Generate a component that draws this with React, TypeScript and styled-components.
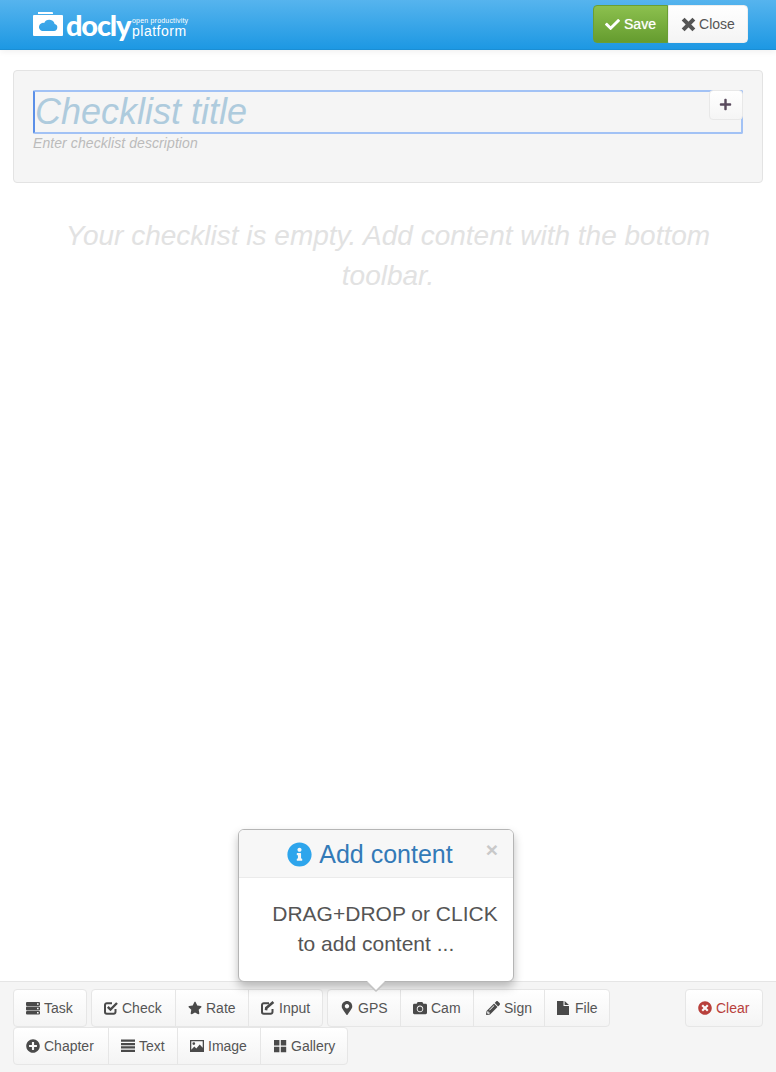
import styled, { createGlobalStyle } from "styled-components";
import type { ReactNode } from "react";
import {
  FaCamera,
  FaCheck,
  FaInfoCircle,
  FaMapMarkerAlt,
  FaPencilAlt,
  FaPlus,
  FaPlusCircle,
  FaStar,
  FaTimesCircle,
} from "react-icons/fa";

const GlobalStyle = createGlobalStyle`
  html, body {
    margin: 0;
    padding: 0;
    background: #fff;
    font-family: "Liberation Sans", Arial, sans-serif;
    font-size: 14px;
    color: #555;
  }
  * { box-sizing: border-box; }
`;

const Page = styled.div`
  display: flex;
  flex-direction: column;
  width: 776px;
  height: 1072px;
  overflow: hidden;
`;

const Header = styled.header`
  flex: none;
  display: flex;
  align-items: flex-start;
  justify-content: space-between;
  height: 50px;
  padding: 5px 28px 0 33px;
  background: linear-gradient(to bottom, #56b4ee, #1d98e3);
  border-bottom: 1px solid #1b8ed4;
  box-shadow: 0 2px 6px rgba(0, 0, 0, 0.06);
`;

const Logo = styled.div`
  display: flex;
  align-items: flex-start;
  color: #fff;
  padding-top: 6px;
`;

const LogoMark = styled.svg`
  flex: none;
  width: 30px;
  height: 24px;
  margin-top: 1px;
`;

const LogoWord = styled.span`
  font-family: "Lato", sans-serif;
  font-weight: 900;
  font-size: 29px;
  line-height: 28px;
  letter-spacing: -1.2px;
  margin-left: 3px;
  width: 66px;
`;

const LogoTag = styled.div`
  display: flex;
  flex-direction: column;
  margin-top: 6px;
  white-space: nowrap;
`;

const TagSmall = styled.span`
  font-size: 7px;
  line-height: 7px;
  letter-spacing: 0.2px;
`;

const TagLarge = styled.span`
  font-size: 14px;
  line-height: 14px;
  letter-spacing: 0.5px;
`;

const HeaderActions = styled.div`
  display: flex;
`;

const HeaderButton = styled.button<{ $primary?: boolean }>`
  display: flex;
  align-items: center;
  justify-content: center;
  gap: ${(p) => (p.$primary ? "4px" : "3px")};
  height: 38px;
  width: ${(p) => (p.$primary ? "75px" : "80px")};
  padding: 0;
  font: 14px "Liberation Sans", Arial, sans-serif;
  color: ${(p) => (p.$primary ? "#fff" : "#555")};
  text-shadow: ${(p) => (p.$primary ? "0 0 1px rgba(255, 255, 255, 0.7)" : "none")};
  background: ${(p) =>
    p.$primary
      ? "linear-gradient(to bottom, #8cc04e, #659c2f)"
      : "linear-gradient(to bottom, #fff, #f4f4f4)"};
  border: 1px solid ${(p) => (p.$primary ? "#6a9e35" : "#eee")};
  border-radius: ${(p) => (p.$primary ? "4px 0 0 4px" : "0 4px 4px 0")};
  svg {
    width: 15px;
    height: 15px;
    flex: none;
  }
`;

const Main = styled.main`
  flex: 1;
  padding: 20px 13px 0;
`;

const TitlePanel = styled.section`
  height: 113px;
  padding: 19px;
  background: #f5f5f5;
  border: 1px solid #e3e3e3;
  border-radius: 4px;
`;

const TitleBox = styled.div`
  position: relative;
  height: 44px;
  border: 2px solid #a2c2f5;
  border-left-color: #5b8fe8;
  border-radius: 2px;
`;

const TitleText = styled.div`
  font-style: italic;
  font-size: 36px;
  line-height: 40px;
  color: #aecbdd;
`;

const PlusButton = styled.button`
  position: absolute;
  top: -2px;
  right: -2px;
  display: flex;
  align-items: center;
  justify-content: center;
  width: 34px;
  height: 30px;
  padding: 0 1px 1px 0;
  font-size: 13px;
  color: #5a4b5e;
  background: linear-gradient(to bottom, #fff, #f5f5f5);
  border: 1px solid #e8e8e8;
  border-radius: 4px;
`;

const Description = styled.div`
  margin-top: -1px;
  font-style: italic;
  font-size: 14px;
  line-height: 20px;
  letter-spacing: 0.08px;
  color: #bbb;
`;

const EmptyNote = styled.p`
  margin: 33px auto 0;
  width: 680px;
  font-style: italic;
  font-size: 28px;
  line-height: 40px;
  text-align: center;
  color: #e2e2e2;
`;

const Toolbar = styled.footer`
  position: relative;
  flex: none;
  display: flex;
  justify-content: space-between;
  align-items: flex-start;
  height: 91px;
  padding: 7px 13px 0;
  background: #f5f5f5;
  border-top: 1px solid #e5e5e5;
`;

const ToolRows = styled.div`
  display: flex;
  flex-direction: column;
`;

const ToolRow = styled.div`
  display: flex;
  gap: 4px;
`;

const ToolGroup = styled.div`
  display: flex;
  & > button + button {
    margin-left: -1px;
    border-top-left-radius: 0;
    border-bottom-left-radius: 0;
  }
  & > button:not(:last-child) {
    border-top-right-radius: 0;
    border-bottom-right-radius: 0;
  }
`;

const ToolButton = styled.button<{ $danger?: boolean; $width: number }>`
  display: flex;
  align-items: center;
  gap: 4px;
  width: ${(p) => p.$width}px;
  height: 38px;
  padding: 0 0 0 12px;
  font: 14px "Liberation Sans", Arial, sans-serif;
  color: ${(p) => (p.$danger ? "#b8403c" : "#555")};
  background: linear-gradient(to bottom, #fff, #f4f4f4);
  border: 1px solid #e6e6e6;
  border-radius: 4px;
  white-space: nowrap;
  svg {
    flex: none;
    width: 14px;
    height: 14px;
    color: ${(p) => (p.$danger ? "#b8403c" : "#4a4a4a")};
  }
`;

const Popover = styled.aside`
  position: absolute;
  left: 238px;
  bottom: 90px;
  width: 276px;
  height: 153px;
  background: #fff;
  border: 1px solid #b5b5b5;
  border-radius: 6px;
  box-shadow: 0 5px 10px rgba(0, 0, 0, 0.25);
  &::before {
    content: "";
    position: absolute;
    left: 126px;
    bottom: -11px;
    border-style: solid;
    border-width: 10px 11px 0;
    border-color: #c4c4c4 transparent transparent;
  }
  &::after {
    content: "";
    position: absolute;
    left: 127px;
    bottom: -9px;
    border-style: solid;
    border-width: 10px 10px 0;
    border-color: #fff transparent transparent;
  }
`;

const PopoverHead = styled.div`
  position: relative;
  display: flex;
  align-items: center;
  justify-content: center;
  gap: 7px;
  height: 48px;
  padding: 2px 12px 0 0;
  background: #f7f7f7;
  border-bottom: 1px solid #ebebeb;
  border-radius: 5px 5px 0 0;
  font-size: 25px;
  color: #337ab7;
  svg {
    font-size: 25px;
    color: #2ea5ec;
  }
`;

const PopoverClose = styled.span`
  position: absolute;
  top: 8px;
  right: 15px;
  font-weight: bold;
  font-size: 21px;
  line-height: 24px;
  color: #c9c9c9;
`;

const PopoverBody = styled.div`
  padding: 21px 15px 0 33px;
  font-size: 21px;
  line-height: 30px;
  color: #555;
  text-align: center;
  white-space: nowrap;
`;

const BodyTail = styled.span`
  padding-right: 18px;
`;

function TaskIcon() {
  return (
    <svg viewBox="0 0 14 14" fill="currentColor" fillRule="evenodd">
      <path d="M1 1h12a1 1 0 0 1 1 1v2a1 1 0 0 1-1 1H1a1 1 0 0 1-1-1V2a1 1 0 0 1 1-1zm10 1.2v1.6h1.6V2.2zM1 5.6h12a1 1 0 0 1 1 1v1.8a1 1 0 0 1-1 1H1a1 1 0 0 1-1-1V6.6a1 1 0 0 1 1-1zm10 1.1v1.6h1.6V6.7zM1 10h12a1 1 0 0 1 1 1v1.6a1 1 0 0 1-1 1H1a1 1 0 0 1-1-1V11a1 1 0 0 1 1-1zm10 1v1.6h1.6V11z" />
    </svg>
  );
}

function CheckIcon() {
  return (
    <svg viewBox="0 0 14 14" fill="none" stroke="currentColor">
      <path strokeWidth="2" d="M11.5 8v3a1.8 1.8 0 0 1-1.8 1.8H2.8A1.8 1.8 0 0 1 1 11V4a1.8 1.8 0 0 1 1.8-1.8H8" />
      <path strokeWidth="2.4" d="M3.8 5.8l2.7 2.8L13 2" />
    </svg>
  );
}

function EditIcon() {
  return (
    <svg viewBox="0 0 14 14" fill="none" stroke="currentColor">
      <path strokeWidth="2" d="M11.5 8v3a1.8 1.8 0 0 1-1.8 1.8H2.8A1.8 1.8 0 0 1 1 11V4a1.8 1.8 0 0 1 1.8-1.8H8" />
      <path strokeWidth="2.6" d="M5 9.2l.3-2.2L12.4 1" />
    </svg>
  );
}

function FileIcon() {
  return (
    <svg viewBox="0 0 14 14" fill="currentColor">
      <path d="M0 0h6.5v5H12v9H0zM7.6 0L12 4H7.6z" />
    </svg>
  );
}

function LinesIcon() {
  return (
    <svg viewBox="0 0 14 14" fill="currentColor">
      <path d="M0 .5h14v2.3H0zM0 3.9h14v2.3H0zM0 7.3h14v2.3H0zM0 10.7h14V13H0z" />
    </svg>
  );
}

function PictureIcon() {
  return (
    <svg viewBox="0 0 14 14" fill="currentColor" fillRule="evenodd">
      <path d="M0 1h14v12H0zM1.3 2.3v8.4l3-3.2 2 1.9 3.4-3.9 3 3.2V2.3zM3.8 3.2a1.4 1.4 0 1 1 0 2.8 1.4 1.4 0 0 1 0-2.8z" />
    </svg>
  );
}

function GridIcon() {
  return (
    <svg viewBox="0 0 14 14" fill="currentColor">
      <path d="M1 1h5.4v5.4H1zM7.8 1h5.4v5.4H7.8zM1 7.8h5.4v5.4H1zM7.8 7.8h5.4v5.4H7.8z" />
    </svg>
  );
}

function CrossIcon() {
  return (
    <svg viewBox="0 0 14 14" fill="none" stroke="currentColor" strokeWidth="3.8">
      <path d="M2 2l10 10M12 2L2 12" />
    </svg>
  );
}

function Tool({
  icon,
  label,
  width,
  danger,
}: {
  icon: ReactNode;
  label: string;
  width: number;
  danger?: boolean;
}) {
  return (
    <ToolButton $danger={danger} $width={width}>
      {icon}
      {label}
    </ToolButton>
  );
}

export default function App() {
  return (
    <Page>
      <GlobalStyle />
      <Header>
        <Logo>
          <LogoMark viewBox="0 0 30 24">
            <path
              fill="#fff"
              fillRule="evenodd"
              d="M5 0h14a1 1 0 0 1 1 1v1H5zM1 3h28a1 1 0 0 1 1 1v19a1 1 0 0 1-1 1H1a1 1 0 0 1-1-1V4a1 1 0 0 1 1-1zM9 19h12a3.5 3.5 0 0 0 .6-6.9A5.5 5.5 0 0 0 11.2 11 4 4 0 0 0 9 19z"
            />
          </LogoMark>
          <LogoWord>docly</LogoWord>
          <LogoTag>
            <TagSmall>open productivity</TagSmall>
            <TagLarge>platform</TagLarge>
          </LogoTag>
        </Logo>
        <HeaderActions>
          <HeaderButton $primary>
            <FaCheck />
            Save
          </HeaderButton>
          <HeaderButton>
            <CrossIcon />
            Close
          </HeaderButton>
        </HeaderActions>
      </Header>

      <Main>
        <TitlePanel>
          <TitleBox>
            <TitleText>Checklist title</TitleText>
            <PlusButton>
              <FaPlus />
            </PlusButton>
          </TitleBox>
          <Description>Enter checklist description</Description>
        </TitlePanel>
        <EmptyNote>Your checklist is empty. Add content with the bottom toolbar.</EmptyNote>
      </Main>

      <Toolbar>
        <Popover>
          <PopoverHead>
            <FaInfoCircle />
            Add content
            <PopoverClose>×</PopoverClose>
          </PopoverHead>
          <PopoverBody>
            DRAG+DROP or CLICK
            <br />
            <BodyTail>to add content ...</BodyTail>
          </PopoverBody>
        </Popover>
        <ToolRows>
          <ToolRow>
            <ToolGroup>
              <Tool icon={<TaskIcon />} label="Task" width={74} />
            </ToolGroup>
            <ToolGroup>
              <Tool icon={<CheckIcon />} label="Check" width={85} />
              <Tool icon={<FaStar />} label="Rate" width={74} />
              <Tool icon={<EditIcon />} label="Input" width={75} />
            </ToolGroup>
            <ToolGroup>
              <Tool icon={<FaMapMarkerAlt />} label="GPS" width={74} />
              <Tool icon={<FaCamera />} label="Cam" width={74} />
              <Tool icon={<FaPencilAlt />} label="Sign" width={72} />
              <Tool icon={<FileIcon />} label="File" width={66} />
            </ToolGroup>
          </ToolRow>
          <ToolRow>
            <ToolGroup>
              <Tool icon={<FaPlusCircle />} label="Chapter" width={96} />
              <Tool icon={<LinesIcon />} label="Text" width={70} />
              <Tool icon={<PictureIcon />} label="Image" width={84} />
              <Tool icon={<GridIcon />} label="Gallery" width={88} />
            </ToolGroup>
          </ToolRow>
        </ToolRows>
        <Tool danger icon={<FaTimesCircle />} label="Clear" width={78} />
      </Toolbar>
    </Page>
  );
}
